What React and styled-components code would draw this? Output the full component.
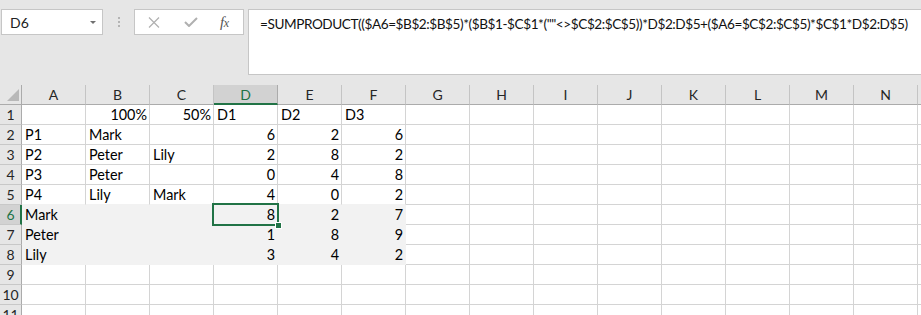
import React from 'react';
import styled, { createGlobalStyle } from 'styled-components';

const GlobalStyle = createGlobalStyle`
  html, body {
    margin: 0;
    padding: 0;
    background: #ffffff;
    overflow: hidden;
  }
  body {
    font-family: 'Lato', 'Liberation Sans', sans-serif;
  }
`;

const GREEN = '#217346';
const FILL = '#f2f2f2';
const GRID = '#d4d4d4';

const COLUMNS = ['A', 'B', 'C', 'D', 'E', 'F', 'G', 'H', 'I', 'J', 'K', 'L', 'M', 'N', 'O'];

const DATA = [
  ['', '100%', '50%', 'D1', 'D2', 'D3'],
  ['P1', 'Mark', '', 6, 2, 6],
  ['P2', 'Peter', 'Lily', 2, 8, 2],
  ['P3', 'Peter', '', 0, 4, 8],
  ['P4', 'Lily', 'Mark', 4, 0, 2],
  ['Mark', '', '', 8, 2, 7],
  ['Peter', '', '', 1, 8, 9],
  ['Lily', '', '', 3, 4, 2],
  [],
  [],
  [],
];

const FILLED_ROWS = [6, 7, 8];
const FORMULA =
  '=SUMPRODUCT(($A6=$B$2:$B$5)*($B$1-$C$1*(""<>$C$2:$C$5))*D$2:D$5+($A6=$C$2:$C$5)*$C$1*D$2:D$5)';

const Page = styled.div`
  width: 921px;
  height: 315px;
  overflow: hidden;
`;

const TopBar = styled.div`
  height: 85px;
  box-sizing: border-box;
  background: #e6e6e6;
  display: flex;
  align-items: flex-start;
  padding: 9px 0 0 1px;
`;

const NameBox = styled.div`
  width: 102px;
  height: 26px;
  box-sizing: border-box;
  background: #fff;
  border: 1px solid #c6c6c6;
  display: flex;
  align-items: center;
  justify-content: space-between;
  padding: 0 6px 0 8px;
  font-size: 14px;
  color: #222;
`;

const DropArrow = styled.span`
  width: 0;
  height: 0;
  border-left: 3px solid transparent;
  border-right: 3px solid transparent;
  border-top: 3px solid #707070;
  margin-top: 1px;
`;

const Grip = styled.div`
  width: 31px;
  height: 26px;
  display: flex;
  flex-direction: column;
  align-items: center;
  justify-content: center;
  gap: 2px;
  padding-left: 1px;
  box-sizing: border-box;
`;

const Dot = styled.span`
  width: 2px;
  height: 2px;
  background: #b4b4b4;
`;

const FxBox = styled.div`
  width: 110px;
  height: 26px;
  box-sizing: border-box;
  background: #fff;
  border: 1px solid #c6c6c6;
  display: flex;
  align-items: center;
  padding-left: 13px;
`;

const IconSlot = styled.span`
  width: ${(p) => p.$w}px;
  display: flex;
  align-items: center;
`;

const FxText = styled.span`
  font-family: 'Liberation Serif', 'DejaVu Serif', serif;
  font-style: italic;
  font-size: 15px;
  color: #555;
  letter-spacing: -0.5px;
  & span {
    font-size: 12px;
  }
`;

const FormulaBar = styled.div`
  flex: 1;
  height: 66px;
  box-sizing: border-box;
  margin-left: 4px;
  background: #fff;
  border: 1px solid #c6c6c6;
  border-right: none;
  padding: 6px 0 0 11px;
  font-size: 13.6px;
  letter-spacing: -0.43px;
  color: #111;
  white-space: nowrap;
  overflow: hidden;
`;

const Sheet = styled.div`
  display: flex;
  flex-direction: column;
`;

const Row = styled.div`
  display: flex;
  height: 20px;
`;

const Corner = styled.div`
  width: 22px;
  height: 20px;
  box-sizing: border-box;
  background: #e6e6e6;
  border-right: 1px solid #ababab;
  border-bottom: 1px solid #ababab;
  display: flex;
  align-items: flex-end;
  justify-content: flex-end;
  padding: 0 2px 3px 0;
  flex-shrink: 0;
`;

const ColHead = styled.div`
  width: 64px;
  height: 20px;
  box-sizing: border-box;
  flex-shrink: 0;
  background: ${(p) => (p.$sel ? '#d2d2d2' : '#e6e6e6')};
  color: ${(p) => (p.$sel ? GREEN : '#262626')};
  border-right: 1px solid ${(p) => (p.$sel ? '#ababab' : '#c4c4c4')};
  border-bottom: ${(p) => (p.$sel ? `2px solid ${GREEN}` : '1px solid #ababab')};
  display: flex;
  align-items: center;
  justify-content: center;
  font-size: 14px;
  padding-top: ${(p) => (p.$sel ? 1 : 0)}px;
`;

const RowHead = styled.div`
  width: 22px;
  height: 20px;
  box-sizing: border-box;
  flex-shrink: 0;
  background: ${(p) => (p.$sel ? '#d2d2d2' : '#e6e6e6')};
  color: ${(p) => (p.$sel ? GREEN : '#262626')};
  border-right: ${(p) => (p.$sel ? `2px solid ${GREEN}` : '1px solid #ababab')};
  border-bottom: 1px solid #c8c8c8;
  display: flex;
  align-items: center;
  justify-content: center;
  font-size: 14px;
  padding-left: ${(p) => (p.$sel ? 1 : 0)}px;
`;

const Cell = styled.div`
  position: ${(p) => (p.$active ? 'relative' : 'static')};
  width: 64px;
  height: 20px;
  box-sizing: border-box;
  flex-shrink: 0;
  background: ${(p) => (p.$fill ? FILL : '#fff')};
  border-right: 1px solid ${(p) => (p.$fill ? FILL : GRID)};
  border-bottom: 1px solid ${(p) => (p.$fill || p.$above ? FILL : GRID)};
  display: flex;
  align-items: center;
  justify-content: ${(p) => (p.$num ? 'flex-end' : 'flex-start')};
  padding: 0 2px 0 3px;
  font-size: 14.4px;
  color: #000;
  white-space: nowrap;
`;

const Selection = styled.div`
  position: absolute;
  z-index: 2;
  left: -2px;
  top: -2px;
  width: 67px;
  height: 23px;
  box-sizing: border-box;
  border: 2px solid ${GREEN};
  pointer-events: none;
`;

const FillHandle = styled.div`
  position: absolute;
  right: -4px;
  bottom: -4px;
  width: 5px;
  height: 5px;
  background: ${GREEN};
  box-shadow: 0 0 0 1px #fff;
`;

function CrossIcon() {
  return (
    <svg width="12" height="11" viewBox="0 0 12 11">
      <path d="M1 0.5 L11 10.5 M11 0.5 L1 10.5" stroke="#b0b0b0" strokeWidth="1.2" fill="none" />
    </svg>
  );
}

function CheckIcon() {
  return (
    <svg width="14" height="10" viewBox="0 0 14 10">
      <path d="M1 5 L5 9 L13 1" stroke="#b0b0b0" strokeWidth="2" fill="none" />
    </svg>
  );
}

function CornerMark() {
  return (
    <svg width="12" height="12" viewBox="0 0 12 12">
      <path d="M0 12 L12 12 L12 0 Z" fill="#b8b8b8" />
    </svg>
  );
}

export default function App() {
  const selRow = 6;
  const selCol = 3;

  return (
    <Page>
      <GlobalStyle />
      <TopBar>
        <NameBox>
          <span>D6</span>
          <DropArrow />
        </NameBox>
        <Grip>
          <Dot />
          <Dot />
          <Dot />
        </Grip>
        <FxBox>
          <IconSlot $w={36}>
            <CrossIcon />
          </IconSlot>
          <IconSlot $w={36}>
            <CheckIcon />
          </IconSlot>
          <IconSlot $w={20}>
            <FxText>
              f<span>x</span>
            </FxText>
          </IconSlot>
        </FxBox>
        <FormulaBar>{FORMULA}</FormulaBar>
      </TopBar>

      <Sheet>
        <Row>
          <Corner>
            <CornerMark />
          </Corner>
          {COLUMNS.map((c, i) => (
            <ColHead key={c} $sel={i === selCol}>
              {c}
            </ColHead>
          ))}
        </Row>
        {DATA.map((cells, r) => {
          const rowNum = r + 1;
          const filled = FILLED_ROWS.includes(rowNum);
          const nextFilled = FILLED_ROWS.includes(rowNum + 1);
          return (
            <Row key={rowNum}>
              <RowHead $sel={rowNum === selRow}>{rowNum}</RowHead>
              {COLUMNS.map((c, i) => {
                const value = cells[i];
                const inBlock = i < 6;
                const isSel = rowNum === selRow && i === selCol;
                const isNum = typeof value === 'number' || /%$/.test(value || '');
                return (
                  <Cell
                    key={c}
                    $fill={filled && inBlock}
                    $above={nextFilled && inBlock}
                    $num={isNum}
                    $active={isSel}
                  >
                    {value}
                    {isSel && (
                      <Selection>
                        <FillHandle />
                      </Selection>
                    )}
                  </Cell>
                );
              })}
            </Row>
          );
        })}
      </Sheet>
    </Page>
  );
}
